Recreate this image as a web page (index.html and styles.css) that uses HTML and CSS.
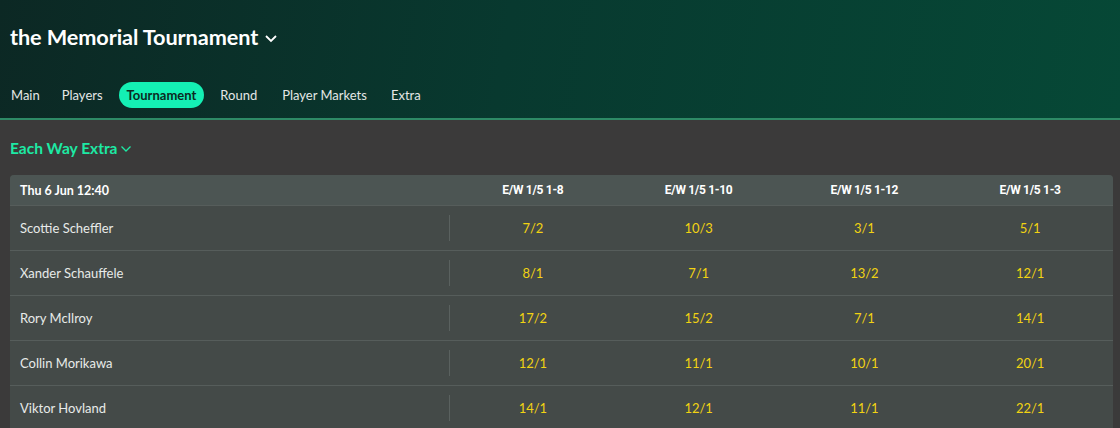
FILE: index.html
```html
<!DOCTYPE html>
<html>
<head>
<meta charset="utf-8">
<link rel="stylesheet" href="styles.css">
</head>
<body>
<header class="hero">
  <h1 class="title">the Memorial Tournament
    <svg class="chev" width="14" height="9" viewBox="0 0 14 9"><path d="M2 2 L7 7 L12 2" fill="none" stroke="#fff" stroke-width="1.8"/></svg>
  </h1>
  <nav class="tabs">
    <span class="tab t-main">Main</span>
    <span class="tab t-players">Players</span>
    <span class="tab active">Tournament</span>
    <span class="tab t-round">Round</span>
    <span class="tab t-pm">Player Markets</span>
    <span class="tab">Extra</span>
  </nav>
</header>
<main class="content">
  <h2 class="market">Each Way Extra
    <svg class="mchev" width="12" height="8" viewBox="0 0 12 8"><path d="M1.5 1.5 L6 6 L10.5 1.5" fill="none" stroke="#1de9a4" stroke-width="1.3"/></svg>
  </h2>
  <div class="table">
    <div class="row head">
      <div class="name">Thu 6 Jun 12:40</div>
      <div class="col">E/W 1/5 1-8</div>
      <div class="col">E/W 1/5 1-10</div>
      <div class="col">E/W 1/5 1-12</div>
      <div class="col">E/W 1/5 1-3</div>
    </div>
    <div class="row">
      <div class="name">Scottie Scheffler</div>
      <div class="col odd">7/2</div><div class="col odd">10/3</div><div class="col odd">3/1</div><div class="col odd">5/1</div>
    </div>
    <div class="row">
      <div class="name">Xander Schauffele</div>
      <div class="col odd">8/1</div><div class="col odd">7/1</div><div class="col odd">13/2</div><div class="col odd">12/1</div>
    </div>
    <div class="row">
      <div class="name">Rory McIlroy</div>
      <div class="col odd">17/2</div><div class="col odd">15/2</div><div class="col odd">7/1</div><div class="col odd">14/1</div>
    </div>
    <div class="row">
      <div class="name">Collin Morikawa</div>
      <div class="col odd">12/1</div><div class="col odd">11/1</div><div class="col odd">10/1</div><div class="col odd">20/1</div>
    </div>
    <div class="row">
      <div class="name">Viktor Hovland</div>
      <div class="col odd">14/1</div><div class="col odd">12/1</div><div class="col odd">11/1</div><div class="col odd">22/1</div>
    </div>
  </div>
</main>
</body>
</html>
```
FILE: styles.css
```css
* { box-sizing: border-box; }
html, body { margin: 0; padding: 0; }
body {
  width: 1120px;
  height: 428px;
  overflow: hidden;
  background: #3b3a3a;
  font-family: "Lato", "Open Sans", sans-serif;
  color: #fff;
}
.hero {
  height: 120px;
  background: linear-gradient(100deg, #0c2824 0%, #08392f 45%, #064836 100%);
  border-bottom: 2px solid #2e8a66;
  padding: 0 10px;
  display: flex;
  flex-direction: column;
}
.title {
  margin: 0;
  height: 74px;
  display: flex;
  align-items: center;
  gap: 6px;
  font-size: 21.7px;
  font-weight: 700;
  letter-spacing: -0.1px;
}
.chev { margin-top: 3px; }
.tabs {
  display: flex;
  align-items: center;
  height: 28px;
  margin-top: 7px;
}
.tab {
  font-size: 13px;
  color: #e4e7e6;
  padding: 0 7px;
  height: 26px;
  line-height: 26px;
  border-radius: 13px;
  margin-right: 8px;
}
.t-main { padding-left: 1px; }
.t-players { margin-right: 9px; }
.t-round { margin-right: 11px; }
.t-pm { margin-right: 10px; }
.tab.active {
  background: #14f0b4;
  color: #0b2a22;
  font-weight: 700;
  padding: 0 8px;
  margin-right: 9px;
}
.content {
  padding: 0 7px 0 10px;
}
.market {
  margin: 0;
  height: 55px;
  display: flex;
  align-items: center;
  gap: 3px;
  font-size: 15.5px;
  font-weight: 700;
  color: #1de9a4;
  padding-top: 1px;
}
.mchev { margin-top: 2px; }
.table {
  border-radius: 4px 4px 0 0;
  overflow: hidden;
  background: #444a48;
}
.row {
  display: grid;
  grid-template-columns: 440px repeat(4, 1fr);
  height: 45px;
  align-items: center;
  border-top: 1px solid #565d5b;
}
.row.head {
  height: 30px;
  background: #4c5553;
  border-top: none;
  font-weight: 700;
  font-size: 12px;
}
.name {
  padding-left: 10px;
  font-size: 13px;
  color: #e8eae9;
  height: 100%;
  display: flex;
  align-items: center;
  position: relative;
}
.row:not(.head) .name::after {
  content: "";
  position: absolute;
  right: 0;
  top: 9px;
  bottom: 9px;
  width: 1px;
  background: #5a615f;
}
.head .name { font-size: 12.5px; color: #fff; font-weight: 700; }
.col {
  text-align: center;
  font-size: 12.5px;
}
.head .col {
  font-family: "Roboto", sans-serif;
  font-weight: 700;
  font-size: 12px;
  letter-spacing: -0.3px;
  color: #fff;
}
.col.odd {
  color: #f2d312;
  font-size: 13px;
}
```
